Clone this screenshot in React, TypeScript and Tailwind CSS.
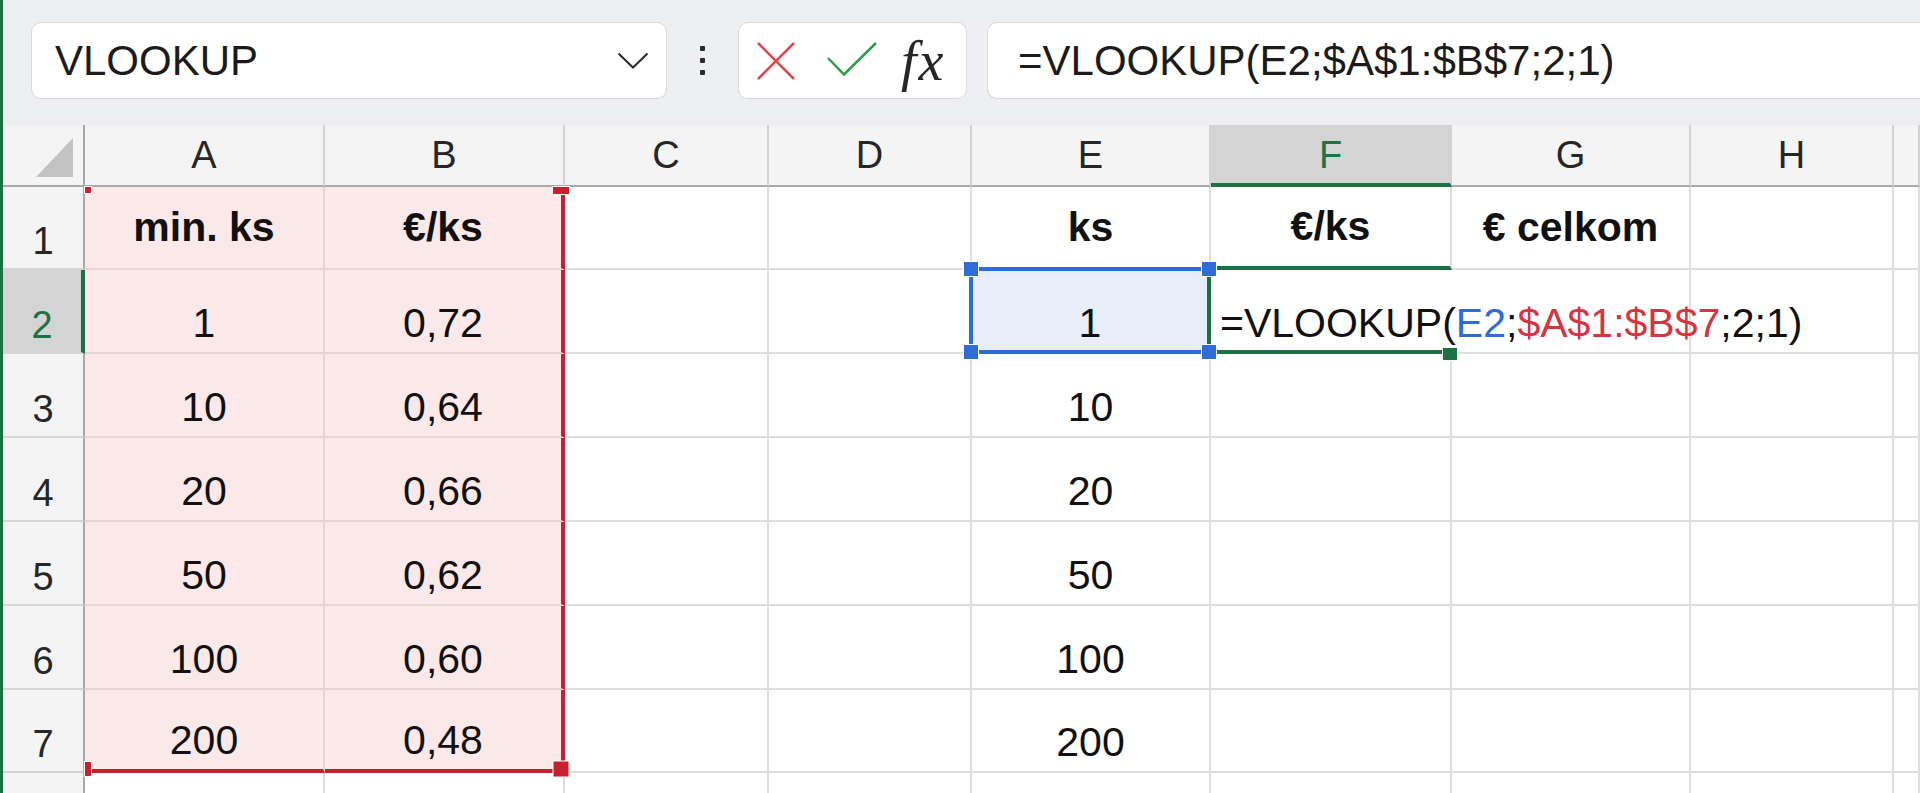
import React from 'react';

const COLS = ['A', 'B', 'C', 'D', 'E', 'F', 'G', 'H', 'I'];
const ROWS = [1, 2, 3, 4, 5, 6, 7, 8];

const DATA: Record<string, string[]> = {
  A: ['min. ks', '1', '10', '20', '50', '100', '200'],
  B: ['€/ks', '0,72', '0,64', '0,66', '0,62', '0,60', '0,48'],
  E: ['ks', '1', '10', '20', '50', '100', '200'],
  F: ['€/ks'],
  G: ['€ celkom'],
};

function Formula() {
  return (
    <>
      =VLOOKUP(<span className="text-[#2e6bd4]">E2</span>;
      <span className="text-[#d63343]">$A$1:$B$7</span>;2;1)
    </>
  );
}

function TopBar() {
  return (
    <div className="flex h-[125px] shrink-0 items-start bg-[#edeff2] pl-[28px] pt-[22px]">
      <div className="flex h-[77px] w-[636px] items-center justify-between rounded-[10px] border border-[#d9dadc] bg-white pl-[23px] pr-[17px]">
        <span className="text-[42px] leading-none text-[#1b1b1b]">VLOOKUP</span>
        <svg width="32" height="17" viewBox="0 0 32 17" fill="none">
          <path d="M1.5 1.5 L16 15.5 L30.5 1.5" stroke="#2b2b2b" strokeWidth="2" />
        </svg>
      </div>
      <div className="flex h-[77px] w-[71px] flex-col items-center justify-center gap-[7px]">
        <div className="h-[5px] w-[5px] rounded-[1px] bg-[#2b2b2b]" />
        <div className="h-[5px] w-[5px] rounded-[1px] bg-[#2b2b2b]" />
        <div className="h-[5px] w-[5px] rounded-[1px] bg-[#2b2b2b]" />
      </div>
      <div className="flex h-[77px] w-[229px] items-center rounded-[10px] border border-[#d9dadc] bg-white pl-[18px]">
        <svg width="38" height="38" viewBox="0 0 38 38" fill="none">
          <path d="M1 1 L37 37 M37 1 L1 37" stroke="#e0464c" strokeWidth="2.5" />
        </svg>
        <svg className="ml-[32px] mt-[-4px]" width="50" height="34" viewBox="0 0 50 34" fill="none">
          <path d="M1 16 L17 32.5 L49 1" stroke="#2f9a4a" strokeWidth="2.5" />
        </svg>
        <span className="ml-[24px] font-['Liberation_Serif',serif] text-[56px] italic leading-none tracking-[2px] text-[#262626]">
          fx
        </span>
      </div>
      <div className="ml-[20px] flex h-[77px] flex-1 items-center rounded-l-[10px] border border-r-0 border-[#d9dadc] bg-white pl-[30px]">
        <span className="whitespace-nowrap text-[42px] leading-none text-[#1b1b1b]">
          =VLOOKUP(E2;$A$1:$B$7;2;1)
        </span>
      </div>
    </div>
  );
}

// small square handle sitting on a cell corner
function Handle({ className }: { className: string }) {
  return <span className={`absolute ring-1 ring-white ${className}`} />;
}

function cellClass(c: string, r: number) {
  const pink = (c === 'A' || c === 'B') && r <= 7;
  let cls = 'flex text-[41px] leading-none text-[#111111] ';
  cls += r === 1 ? 'items-center font-bold ' : 'items-end ';

  if (c === 'E' && r === 2) {
    // referenced cell: blue box, right edge is the active cell's green line
    return (
      cls +
      'relative z-20 -ml-[3px] -mt-[3px] justify-center border-4 border-t-[#2f6cd6] border-l-[#2f6cd6] border-b-[#2f6cd6] border-r-[#1e7145] bg-[#e8eef9] pb-[6px]'
    );
  }
  if (c === 'F' && r === 2) {
    return (
      cls +
      'relative z-10 justify-start whitespace-nowrap border-b-4 border-r-2 border-b-[#1e7145] border-r-transparent pb-[6px] pl-[9px]'
    );
  }

  cls += 'justify-center ';
  if (r !== 1) cls += 'pb-[8px] ';
  if (pink) cls += 'relative bg-[#fbe9ea] ';

  // right edge
  if (c === 'B' && r <= 7) cls += 'border-r-4 border-r-[#c8202f] ';
  else if (pink) cls += 'border-r-2 border-r-[#e4d6d7] ';
  else cls += 'border-r-2 border-r-[#dedede] ';

  // bottom edge
  if (pink && r === 7) cls += 'border-b-4 border-b-[#c8202f] ';
  else if (c === 'F' && r === 1) cls += 'border-b-4 border-b-[#1e7145] ';
  else if (pink) cls += 'border-b-2 border-b-[#e4d6d7] ';
  else cls += 'border-b-2 border-b-[#dedede] ';

  return cls;
}

function cellExtras(c: string, r: number) {
  if (c === 'A' && r === 1) return <Handle className="left-0 top-0 h-[6px] w-[6px] bg-[#c8202f] ring-0" />;
  if (c === 'B' && r === 1)
    return <Handle className="right-0 top-0 h-[7px] w-[16px] translate-x-1/2 bg-[#c8202f] ring-0" />;
  if (c === 'A' && r === 7)
    return <Handle className="bottom-0 left-0 h-[14px] w-[6px] translate-y-1/2 bg-[#c8202f] ring-0" />;
  if (c === 'B' && r === 7)
    return <Handle className="bottom-0 right-0 h-[15px] w-[15px] translate-x-1/2 translate-y-1/2 bg-[#c8202f]" />;
  if (c === 'E' && r === 2)
    return (
      <>
        <Handle className="-left-0.5 -top-0.5 h-[14px] w-[14px] -translate-x-1/2 -translate-y-1/2 bg-[#2f6cd6]" />
        <Handle className="-right-0.5 -top-0.5 h-[14px] w-[14px] translate-x-1/2 -translate-y-1/2 bg-[#2f6cd6]" />
        <Handle className="-bottom-0.5 -left-0.5 h-[14px] w-[14px] -translate-x-1/2 translate-y-1/2 bg-[#2f6cd6]" />
        <Handle className="-bottom-0.5 -right-0.5 h-[14px] w-[14px] translate-x-1/2 translate-y-1/2 bg-[#2f6cd6]" />
      </>
    );
  if (c === 'F' && r === 2)
    return <Handle className="-bottom-1 right-0 h-[12px] w-[14px] translate-x-1/2 translate-y-1/2 bg-[#1e7145]" />;
  return null;
}

function Sheet() {
  const cells: React.ReactNode[] = [];

  cells.push(
    <div
      key="corner"
      className="flex items-end justify-end border-b-2 border-r-2 border-b-[#aaaaaa] border-r-[#a9a9a9] bg-[#f4f4f4] pb-[8px] pr-[10px]"
    >
      <svg width="37" height="39" viewBox="0 0 37 39">
        <polygon points="37,0 37,39 0,39" fill="#c3c3c3" />
      </svg>
    </div>,
  );
  COLS.forEach((c) => {
    const sel = c === 'F';
    cells.push(
      <div
        key={`h-${c}`}
        className={`flex items-center justify-center border-r-2 border-r-[#d2d2d2] text-[38px] leading-none ${
          sel
            ? 'border-b-4 border-b-[#1e7145] bg-[#d4d4d4] pt-[2px] text-[#1e7145]'
            : 'border-b-2 border-b-[#aaaaaa] bg-[#f4f4f4] text-[#262626]'
        }`}
      >
        {c === 'I' ? '' : c}
      </div>,
    );
  });

  ROWS.forEach((r) => {
    const rowSel = r === 2;
    cells.push(
      <div
        key={`r-${r}`}
        className={`flex items-end justify-center border-b-2 border-b-[#d5d5d5] pb-[8px] text-[38px] leading-none ${
          rowSel
            ? 'border-r-4 border-r-[#1e7145] bg-[#d4d4d4] text-[#1e7145]'
            : 'border-r-2 border-r-[#a9a9a9] bg-[#f4f4f4] text-[#262626]'
        }`}
      >
        {r <= 7 ? r : ''}
      </div>,
    );
    COLS.forEach((c) => {
      const isF2 = c === 'F' && r === 2;
      cells.push(
        <div key={`${c}${r}`} className={cellClass(c, r)}>
          {isF2 ? <Formula /> : DATA[c]?.[r - 1]}
          {cellExtras(c, r)}
        </div>,
      );
    });
  });

  return (
    <div className="grid shrink-0 grid-cols-[82px_240px_240px_204px_203px_239px_241px_239px_203px_1fr] grid-rows-[62px_83px_84px_84px_84px_84px_84px_83px_84px]">
      {cells}
    </div>
  );
}

export default function App() {
  return (
    <div className="flex h-[793px] w-[1920px] overflow-hidden bg-white font-['Liberation_Sans',Arial,sans-serif]">
      <div className="w-[3px] shrink-0 bg-[#1e7145]" />
      <div className="flex min-w-0 flex-1 flex-col">
        <TopBar />
        <Sheet />
      </div>
    </div>
  );
}
